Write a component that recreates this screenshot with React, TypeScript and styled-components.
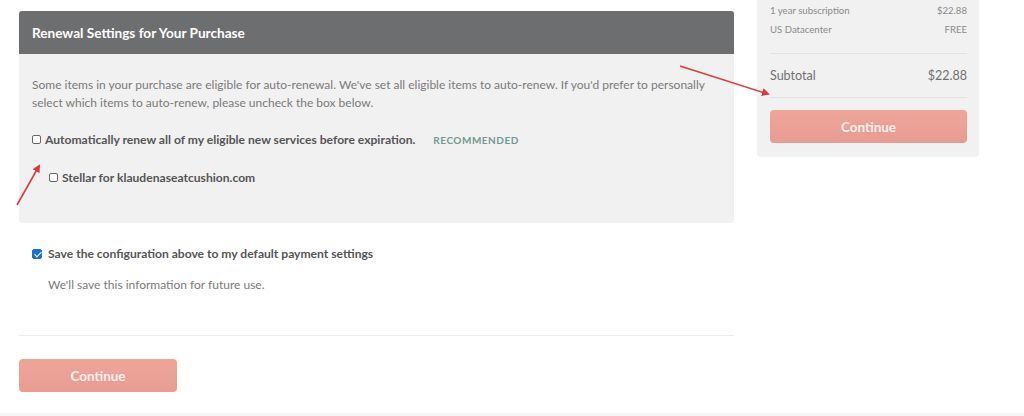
import styled, { createGlobalStyle } from "styled-components";

const GlobalStyle = createGlobalStyle`
    html, body {
        margin: 0;
        padding: 0;
        background: #fff;
        font-family: Lato, "Open Sans", sans-serif;
    }
`;

const Page = styled.div`
    position: relative;
    width: 1024px;
    height: 416px;
    overflow: hidden;
    display: flex;
    align-items: flex-start;
    gap: 23px;
    padding-left: 19px;
    box-sizing: border-box;
    border-bottom: 3px solid #f6f6f6;
`;

const Main = styled.div`
    width: 715px;
    padding-top: 11px;
    display: flex;
    flex-direction: column;
`;

const Panel = styled.section`
    border-radius: 3px;
    overflow: hidden;
    background: #f1f1f1;
`;

const PanelHeader = styled.h2`
    margin: 0;
    height: 43px;
    display: flex;
    align-items: center;
    padding: 0 13px;
    background: #6d6e70;
    color: #fff;
    font-size: 13.6px;
    font-weight: 700;
`;

const PanelBody = styled.div`
    padding: 22px 13px 38px;
    display: flex;
    flex-direction: column;
`;

const Text = styled.p<{ $indent?: number; $top?: number }>`
    margin: ${props => props.$top ?? 0}px 0 0;
    padding-left: ${props => props.$indent ?? 0}px;
    font-size: 12px;
    line-height: 18px;
    color: #7a7a7a;
`;

const CheckRow = styled.label<{ $indent?: number; $top: number }>`
    display: flex;
    align-items: center;
    gap: 4px;
    margin-top: ${props => props.$top}px;
    padding-left: ${props => props.$indent ?? 0}px;
    font-size: 12.1px;
    font-weight: 700;
    color: #555;
    cursor: pointer;
`;

const Box = styled.input<{ $size?: number }>`
    appearance: none;
    margin: 0;
    width: ${props => props.$size ?? 9}px;
    height: ${props => props.$size ?? 9}px;
    border: 1px solid #666;
    border-radius: 2px;
    background: #fff;
    box-sizing: border-box;
    flex-shrink: 0;
    position: relative;

    &:checked {
        background: #1a73c9;
        border-color: #1a73c9;
    }

    &:checked::after {
        content: "";
        position: absolute;
        left: 2.5px;
        top: 0.5px;
        width: 3px;
        height: 6px;
        border: solid #fff;
        border-width: 0 1.5px 1.5px 0;
        transform: rotate(45deg);
    }
`;

const Badge = styled.span`
    margin-left: 14px;
    font-size: 10px;
    font-weight: 700;
    letter-spacing: 0.5px;
    color: #6f9a90;
`;

const SaveBlock = styled.div`
    padding: 23px 13px 41px;
    display: flex;
    flex-direction: column;
    border-bottom: 1px solid #ececec;
`;

const Button = styled.button<{ $wide?: boolean }>`
    width: ${props => (props.$wide ? "100%" : "158px")};
    height: 33px;
    border: none;
    border-radius: 4px;
    background: linear-gradient(#eea599, #e99d92);
    color: #fdf1ef;
    font-family: inherit;
    font-size: 13.5px;
    font-weight: 700;
    cursor: pointer;
`;

const BottomActions = styled.div`
    padding-top: 23px;
`;

const Summary = styled.aside`
    width: 222px;
    background: #f1f1f1;
    border-radius: 0 0 4px 4px;
    padding: 0 12px 14px 13px;
    box-sizing: border-box;
    display: flex;
    flex-direction: column;
`;

const LineItem = styled.div`
    display: flex;
    justify-content: space-between;
    font-size: 9.6px;
    line-height: 19px;
    color: #8a8a8a;
`;

const Divider = styled.hr`
    margin: 0;
    border: none;
    border-top: 1px solid #e2e2e2;
`;

const TotalRow = styled.div`
    display: flex;
    justify-content: space-between;
    align-items: center;
    height: 43px;
    font-size: 12.5px;
    color: #707070;
`;

const Items = styled.div`
    padding: 1px 0 14px;
`;

const ButtonWrap = styled.div`
    padding-top: 12px;
`;

const Indent = styled.span`
    margin-left: 2px;
`;

const Arrows = styled.svg`
    position: absolute;
    inset: 0;
    pointer-events: none;
`;

export default function App() {
    return (
        <>
            <GlobalStyle />
            <Page>
                <Main>
                    <Panel>
                        <PanelHeader>Renewal Settings for Your Purchase</PanelHeader>
                        <PanelBody>
                            <Text>
                                Some items in your purchase are eligible for auto-renewal. We've set all eligible items to auto-renew. If you'd prefer to personally
                                <br />
                                select which items to auto-renew, please uncheck the box below.
                            </Text>
                            <CheckRow $top={20}>
                                <Box type="checkbox" />
                                Automatically renew all of my eligible new services before expiration.
                                <Badge>RECOMMENDED</Badge>
                            </CheckRow>
                            <CheckRow $top={23} $indent={17}>
                                <Box type="checkbox" />
                                Stellar for klaudenaseatcushion.com
                            </CheckRow>
                        </PanelBody>
                    </Panel>
                    <SaveBlock>
                        <CheckRow $top={0}>
                            <Box type="checkbox" $size={10} defaultChecked />
                            <Indent>Save the configuration above to my default payment settings</Indent>
                        </CheckRow>
                        <Text $indent={16} $top={15}>
                            We'll save this information for future use.
                        </Text>
                    </SaveBlock>
                    <BottomActions>
                        <Button>Continue</Button>
                    </BottomActions>
                </Main>
                <Summary>
                    <Items>
                        <LineItem>
                            <span>1 year subscription</span>
                            <span>$22.88</span>
                        </LineItem>
                        <LineItem>
                            <span>US Datacenter</span>
                            <span>FREE</span>
                        </LineItem>
                    </Items>
                    <Divider />
                    <TotalRow>
                        <span>Subtotal</span>
                        <span>$22.88</span>
                    </TotalRow>
                    <Divider />
                    <ButtonWrap>
                        <Button $wide>Continue</Button>
                    </ButtonWrap>
                </Summary>
                <Arrows width="1024" height="416" viewBox="0 0 1024 416">
                    <defs>
                        <marker id="head" markerWidth="8" markerHeight="8" refX="6" refY="4" orient="auto" markerUnits="userSpaceOnUse">
                            <path d="M0,0 L8,4 L0,8 Z" fill="#dd3b36" />
                        </marker>
                    </defs>
                    <line x1="680" y1="66" x2="768" y2="94" stroke="#dd3b36" strokeWidth="1.6" markerEnd="url(#head)" />
                    <line x1="17" y1="205" x2="39" y2="166" stroke="#dd3b36" strokeWidth="1.6" markerEnd="url(#head)" />
                </Arrows>
            </Page>
        </>
    );
}
